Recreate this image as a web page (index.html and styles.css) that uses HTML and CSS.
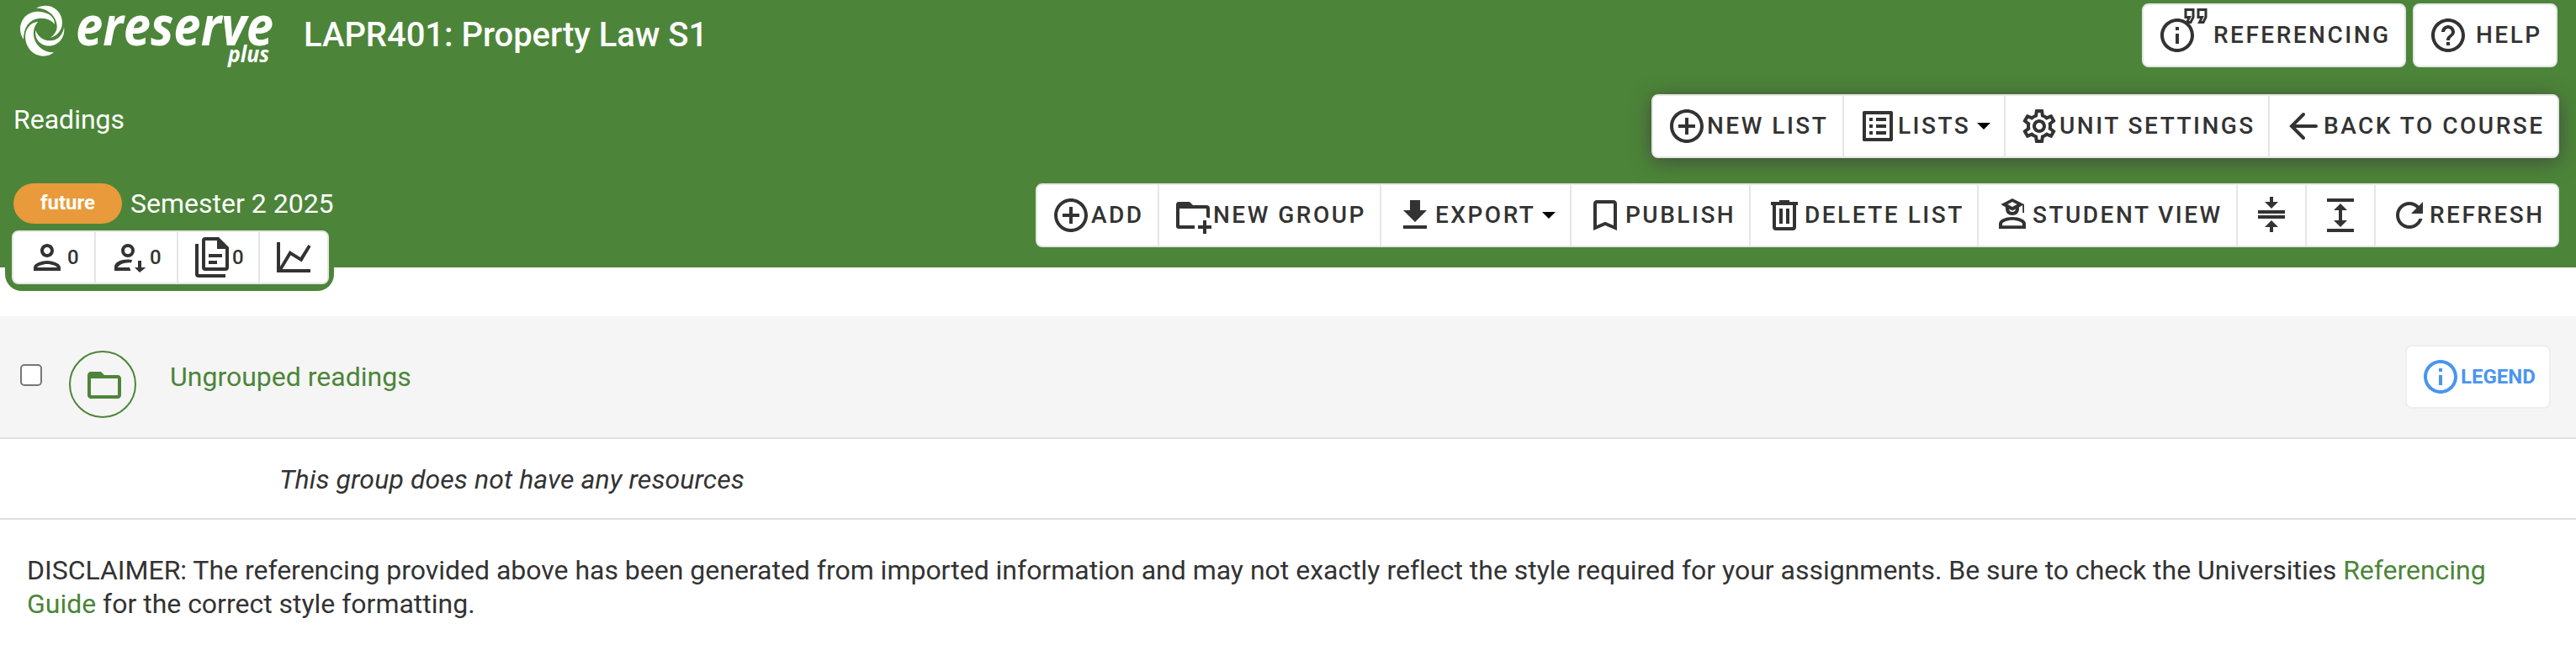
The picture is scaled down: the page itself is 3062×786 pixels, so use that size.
FILE: index.html
```
<!DOCTYPE html>
<html lang="en">
<head>
    <meta charset="UTF-8">
    <meta name="viewport" content="width=device-width, initial-scale=1.0">
    <title>LAPR401: Property Law S1</title>
    <link rel="stylesheet" href="styles.css">
</head>
<body>
    <header class="header">
        <div class="row row-top">
            <svg class="logo" viewBox="0 0 310 84">
                <g fill="#fff" transform="translate(-24 0) scale(0.3333)">
                    <path d="M130 29C150 17 180 17 200 34C220 50 224 75 221 92C216 114 198 130 180 134C196 122 204 108 203 92C202 60 172 28 130 29Z"/>
                    <path d="M84 140C68 118 68 88 84 66C102 42 132 38 156 44C182 50 195 66 195 86C184 72 162 62 138 66C104 70 84 98 84 140Z"/>
                    <path d="M136 77C108 80 91 102 90 130C91 172 120 200 155 200C170 200 183 195 192 187C160 189 130 168 122 136C116 112 122 92 136 77Z"/>
                    <path d="M228 95C234 126 216 156 184 163C150 168 122 144 127 108C136 132 156 146 180 145C206 143 226 124 228 95Z"/>
                </g>
                <text class="logo-name" x="66" y="54" textLength="235" lengthAdjust="spacingAndGlyphs">ereserve</text>
                <text class="logo-plus" x="247" y="74" textLength="49" lengthAdjust="spacingAndGlyphs">plus</text>
            </svg>
            <h1 class="title">LAPR401: Property Law S1</h1>
            <div class="top-buttons">
                <button class="btn w-ref">
                    <svg class="icon" viewBox="0 0 24 24"><path d="M11 7h2v2h-2zm0 4h2v6h-2zm1-9C6.480 2 2 6.480 2 12s4.480 10 10 10 10-4.480 10-10S17.520 2 12 2zm0 18c-4.410 0-8-3.590-8-8s3.590-8 8-8 8 3.590 8 8-3.590 8-8 8z"/></svg>
                    <svg class="quote" viewBox="0 0 24 24"><path d="M18.620 18h-5.240l2-4H13V6h8v7.240L18.620 18zm-2-2h.760L19 12.760V8h-4v4h3.620l-2 4zm-8 2H3.380l2-4H3V6h8v7.240L8.620 18zm-2-2h.760L9 12.760V8H5v4h3.620l-2 4z"/></svg>
                    <span>REFERENCING</span>
                </button>
                <button class="btn w-help">
                    <svg class="icon" viewBox="0 0 24 24"><path d="M11 18h2v-2h-2v2zm1-16C6.480 2 2 6.480 2 12s4.480 10 10 10 10-4.480 10-10S17.520 2 12 2zm0 18c-4.410 0-8-3.590-8-8s3.590-8 8-8 8 3.590 8 8-3.590 8-8 8zm0-14c-2.210 0-4 1.790-4 4h2c0-1.100.9-2 2-2s2 .9 2 2c0 2-3 1.750-3 5h2c0-2.250 3-2.500 3-5 0-2.210-1.790-4-4-4z"/></svg>
                    <span>HELP</span>
                </button>
            </div>
        </div>

        <div class="row row-readings">
            <div class="subtitle">Readings</div>
            <div class="group group-raised">
                <button class="item w-new-list">
                    <svg class="icon" viewBox="0 0 24 24"><path d="M13 7h-2v4H7v2h4v4h2v-4h4v-2h-4V7zm-1-5C6.480 2 2 6.480 2 12s4.480 10 10 10 10-4.480 10-10S17.520 2 12 2zm0 18c-4.410 0-8-3.590-8-8s3.590-8 8-8 8 3.590 8 8-3.590 8-8 8z"/></svg>
                    <span>NEW LIST</span>
                </button>
                <button class="item w-lists">
                    <svg class="icon" viewBox="0 0 24 24"><path d="M11 7h6v2h-6zm0 4h6v2h-6zm0 4h6v2h-6zM7 7h2v2H7zm0 4h2v2H7zm0 4h2v2H7zM20.100 3H3.900c-.5 0-.9.400-.9.900v16.200c0 .4.400.9.900.9h16.200c.4 0 .9-.5.900-.9V3.900c0-.5-.5-.9-.9-.9zM19 19H5V5h14v14z"/></svg>
                    <span>LISTS</span>
                    <i class="caret"></i>
                </button>
                <button class="item w-settings">
                    <svg class="icon" viewBox="0 0 24 24"><path d="M19.430 12.980c.04-.32.070-.64.070-.98 0-.34-.03-.66-.07-.98l2.110-1.650c.19-.15.240-.42.120-.64l-2-3.460c-.09-.16-.26-.25-.44-.25-.06 0-.12.010-.17.030l-2.490 1c-.52-.4-1.080-.73-1.690-.98l-.38-2.650C14.460 2.180 14.250 2 14 2h-4c-.25 0-.46.180-.49.420l-.38 2.650c-.61.250-1.170.590-1.690.980l-2.490-1c-.06-.02-.12-.03-.18-.03-.17 0-.34.090-.43.250l-2 3.460c-.13.220-.07.490.120.640l2.110 1.650c-.04.320-.07.650-.07.980s.03.660.070.980l-2.110 1.650c-.19.150-.24.420-.12.640l2 3.460c.09.160.260.250.440.250.06 0 .12-.01.170-.03l2.490-1c.52.400 1.080.730 1.690.980l.38 2.650c.03.240.240.420.490.420h4c.25 0 .46-.18.490-.42l.38-2.650c.61-.25 1.170-.59 1.690-.98l2.490 1c.06.020.120.030.180.030.17 0 .34-.09.430-.25l2-3.460c.12-.22.070-.49-.12-.64l-2.110-1.650zm-1.980-1.710c.04.310.050.520.050.730 0 .21-.02.430-.05.730l-.14 1.130.89.700 1.080.840-.7 1.210-1.270-.51-1.040-.42-.9.680c-.43.320-.84.560-1.250.730l-1.060.43-.16 1.130-.2 1.350h-1.400l-.19-1.350-.16-1.130-1.060-.43c-.43-.18-.83-.41-1.230-.71l-.91-.7-1.060.43-1.270.51-.7-1.210 1.080-.84.890-.7-.14-1.130c-.03-.31-.05-.54-.05-.74s.02-.43.050-.73l.14-1.130-.89-.7-1.080-.84.700-1.210 1.270.51 1.040.42.900-.68c.43-.32.840-.56 1.250-.73l1.060-.43.160-1.130.2-1.350h1.390l.19 1.350.160 1.130 1.060.43c.43.180.830.410 1.230.710l.91.700 1.060-.43 1.270-.51.700 1.210-1.070.850-.89.700.140 1.130zM12 8c-2.210 0-4 1.790-4 4s1.790 4 4 4 4-1.790 4-4-1.790-4-4-4zm0 6c-1.100 0-2-.9-2-2s.9-2 2-2 2 .9 2 2-.9 2-2 2z"/></svg>
                    <span>UNIT SETTINGS</span>
                </button>
                <button class="item w-back">
                    <svg class="icon" viewBox="0 0 24 24"><path class="line" stroke-linecap="round" d="M19.500 12H5.500M12 5l-7 7 7 7"/></svg>
                    <span>BACK TO COURSE</span>
                </button>
            </div>
        </div>

        <div class="row row-semester">
            <div class="semester">
                <span class="badge">future</span>
                <span>Semester 2 2025</span>
            </div>
            <div class="group">
                <button class="item w-add">
                    <svg class="icon" viewBox="0 0 24 24"><path d="M13 7h-2v4H7v2h4v4h2v-4h4v-2h-4V7zm-1-5C6.480 2 2 6.480 2 12s4.480 10 10 10 10-4.480 10-10S17.520 2 12 2zm0 18c-4.410 0-8-3.590-8-8s3.590-8 8-8 8 3.590 8 8-3.590 8-8 8z"/></svg>
                    <span>ADD</span>
                </button>
                <button class="item w-new-group">
                    <svg class="icon" viewBox="0 0 24 24"><path d="M13 18v2H3.500C2.500 20 2 19.500 2 18.500V5.700C2 4.600 2.600 4 3.700 4H10l2 2h8c1.300 0 2 .7 2 2v5.800l-2-.7V8H4v10zM18 15h2v3h3v2h-3v3h-2v-3h-3v-2h3z"/></svg>
                    <span>NEW GROUP</span>
                </button>
                <button class="item w-export">
                    <svg class="icon" viewBox="0 0 24 24"><path d="M19 9h-4V3H9v6H5l7 7 7-7zM5 18v2h14v-2H5z"/></svg>
                    <span>EXPORT</span>
                    <i class="caret"></i>
                </button>
                <button class="item w-publish">
                    <svg class="icon" viewBox="0 0 24 24"><path d="M17 3H7c-1.100 0-2 .9-2 2v16l7-3 7 3V5c0-1.100-.9-2-2-2zm0 15l-5-2.180L7 18V5h10v13z"/></svg>
                    <span>PUBLISH</span>
                </button>
                <button class="item w-delete">
                    <svg class="icon" viewBox="0 0 24 24"><path d="M9 3h6v1h5v2h-1v13c0 1.300-.7 2-2 2H7c-1.300 0-2-.7-2-2V6H4V4h5zM7 6v13h10V6zM9 8h2v9H9zM13 8h2v9h-2z"/></svg>
                    <span>DELETE LIST</span>
                </button>
                <button class="item w-student">
                    <svg class="icon" viewBox="0 0 24 24"><path fill-rule="evenodd" d="M12 2l7 3.500V10.500h-.9V6L16 7.200V8c0 2.500-1.500 4-4 4s-4-1.500-4-4v-.8L5.200 5.500zM12 4L9.200 5.500 12 7l2.800-1.500zM10 8.300c.2 1.200.8 1.700 2 1.700s1.800-.5 2-1.700l-2 1zM12 13c4 0 8 1.500 8 4v3H4v-3c0-2.500 4-4 8-4zM12 14.900c-3 0-6 1.300-6 2.300v.9h12v-.9c0-1-3-2.300-6-2.300z"/></svg>
                    <span>STUDENT VIEW</span>
                </button>
                <button class="item w-collapse">
                    <svg class="icon" viewBox="0 0 24 24"><path d="M8 19h3v3h2v-3h3l-4-4-4 4zm8-15h-3V1h-2v3H8l4 4 4-4zM4 9v2h16V9H4zm0 3v2h16v-2H4z"/></svg>
                </button>
                <button class="item w-collapse">
                    <svg class="icon" viewBox="0 0 24 24"><path d="M4 20h16v2H4zM4 2h16v2H4zm9 7h3l-4-4-4 4h3v6H8l4 4 4-4h-3z"/></svg>
                </button>
                <button class="item w-refresh">
                    <svg class="icon" viewBox="0 0 24 24"><path d="M17.650 6.350C16.200 4.900 14.210 4 12 4c-4.420 0-7.990 3.580-7.990 8s3.570 8 7.990 8c3.730 0 6.840-2.550 7.730-6h-2.080c-.82 2.330-3.040 4-5.650 4-3.310 0-6-2.690-6-6s2.690-6 6-6c1.660 0 3.140.69 4.220 1.780L13 11h7V4l-2.350 2.350z"/></svg>
                    <span>REFRESH</span>
                </button>
            </div>
        </div>
    </header>

    <!-- Stats tab hangs over the bottom edge of the header -->
    <div class="stats">
        <div class="stats-group">
            <button class="stat w-people">
                <svg class="icon" viewBox="0 0 24 24"><path d="M12 6c1.100 0 2 .9 2 2s-.9 2-2 2-2-.9-2-2 .9-2 2-2m0 10c2.700 0 5.800 1.290 6 2H6c.23-.72 3.310-2 6-2m0-12C9.790 4 8 5.790 8 8s1.790 4 4 4 4-1.790 4-4-1.790-4-4-4zm0 10c-2.670 0-8 1.340-8 4v2h16v-2c0-2.660-5.330-4-8-4z"/></svg>
                <span>0</span>
            </button>
            <button class="stat w-down">
                <svg class="icon" viewBox="0 0 24 24"><path d="M11 4a4 4 0 1 1 0 8 4 4 0 0 1 0-8zm0 2a2 2 0 1 0 0 4 2 2 0 0 0 0-4zM11 13.200c1 0 1.800.1 2.600.3L12.900 15.200C9.500 14.700 5.500 16.300 5 18h7l.7 2H3v-2.500c0-2.700 4-4.300 8-4.300zM17 14h2v4h2.700L18 21l-3-3h2z"/></svg>
                <span>0</span>
            </button>
            <button class="stat w-docs">
                <svg class="icon" viewBox="0 0 24 24"><path d="M8 0H16l6 6v12c0 1.300-.7 2-2 2H8c-1.300 0-2-.7-2-2V2c0-1.300.7-2 2-2zM8 2v16h12V7h-5V2zM2 4h2v18h16v2H4c-1.300 0-2-.7-2-2zM10 10h8v2h-8zM10 14h5v2h-5z"/></svg>
                <span>0</span>
            </button>
            <button class="stat w-chart">
                <svg class="icon" viewBox="0 0 24 24"><path d="M2 3h2v14.500L9.600 8l6.400 4 4.700-7.500 1.600 1-5.500 9.200-6.500-4L5.300 19H22v2H2z"/></svg>
            </button>
        </div>
    </div>

    <main class="content">
        <div class="reading-group">
            <input type="checkbox" class="check">
            <div class="folder">
                <svg class="icon" viewBox="0 0 24 24"><path d="M20 6h-8l-2-2H4c-1.100 0-2 .9-2 2v12c0 1.100.9 2 2 2h16c1.100 0 2-.9 2-2V8c0-1.100-.9-2-2-2zm0 12H4V8h16v10z"/></svg>
            </div>
            <a class="group-name">Ungrouped readings</a>
            <button class="legend">
                <svg class="icon" viewBox="0 0 24 24"><path d="M11 7h2v2h-2zm0 4h2v6h-2zm1-9C6.480 2 2 6.480 2 12s4.480 10 10 10 10-4.480 10-10S17.520 2 12 2zm0 18c-4.410 0-8-3.590-8-8s3.590-8 8-8 8 3.590 8 8-3.590 8-8 8z"/></svg>
                <span>LEGEND</span>
            </button>
        </div>
        <div class="empty">This group does not have any resources</div>
        <p class="disclaimer">DISCLAIMER: The referencing provided above has been generated from imported information and may not exactly reflect the style required for your assignments. Be sure to check the Universities <a>Referencing Guide</a> for the correct style formatting.</p>
    </main>
</body>
</html>
```
FILE: styles.css
```
* {
    box-sizing: border-box;
}

body {
    margin: 0;
    font-family: Roboto, "Liberation Sans", sans-serif;
    font-size: 32px;
    line-height: 40px;
    color: #333;
    background-color: #fff;
}

button {
    font-family: inherit;
    font-size: 28px;
    font-weight: 500;
    letter-spacing: 2.5px;
    line-height: 36px;
    color: #333;
    background-color: #fff;
    margin: 0;
    padding: 0 0 0 16px;
    border: none;
    display: flex;
    align-items: center;
    white-space: nowrap;
    cursor: pointer;
}

.icon {
    width: 48px;
    height: 48px;
    flex: none;
    fill: currentColor;
}

.line {
    fill: none;
    stroke: currentColor;
    stroke-width: 2;
}

/* Header */
.header {
    height: 318px;
    background-color: #4c8539;
    color: #fff;
}

.row {
    display: flex;
    justify-content: space-between;
    padding-right: 20px;
}

.row-top {
    height: 112px;
    padding: 4px 22px 0 24px;
}

.row-readings {
    height: 106px;
    padding-left: 16px;
}

.row-semester {
    padding-left: 16px;
}

.logo {
    width: 310px;
    height: 84px;
    margin-top: -4px;
    flex: none;
    overflow: visible;
}

.logo text {
    fill: #fff;
    font-family: "Open Sans", sans-serif;
    font-style: italic;
    font-weight: 700;
}

.logo-name {
    font-size: 65px;
}

.logo-plus {
    font-size: 26px;
}

.title {
    margin: 18px auto 0 27px;
    font-size: 40px;
    font-weight: 500;
    line-height: 40px;
    letter-spacing: -0.05px;
}

.top-buttons {
    display: flex;
    gap: 8px;
}

.btn {
    position: relative;
    height: 76px;
    border: 2px solid #e6e6e6;
    border-radius: 8px;
}

.btn span {
    margin-left: 9px;
}

.w-ref span {
    margin-left: 19px;
}

.quote {
    position: absolute;
    left: 44px;
    top: -5px;
    width: 36px;
    height: 36px;
    fill: currentColor;
}

.w-ref { width: 314px; }
.w-help { width: 172px; }

.subtitle {
    padding-top: 10px;
}

.group {
    display: flex;
    height: 76px;
    border: 2px solid #e6e6e6;
    border-radius: 8px;
    background-color: #fff;
    overflow: hidden;
}

.group-raised {
    box-shadow: 0 4px 24px rgba(60, 40, 60, 0.6);
}

.item {
    border-right: 2px solid #e6e6e6;
}

.item:last-child {
    border-right: none;
}

.caret {
    margin-left: 8px;
    border-left: 8px solid transparent;
    border-right: 8px solid transparent;
    border-top: 8px solid #000;
}

.w-new-list { width: 227px; }
.w-lists { width: 192px; }
.w-settings { width: 314px; }
.w-back { width: 342px; }

.w-add { width: 145px; }
.w-new-group { width: 264px; }
.w-export { width: 226px; }
.w-publish { width: 213px; }
.w-delete { width: 271px; }
.w-student { width: 308px; }
.w-collapse { width: 82px; }
.w-refresh { width: 216px; }

.semester {
    display: flex;
    align-items: center;
    gap: 10px;
    height: 48px;
}

.badge {
    width: 129px;
    height: 48px;
    border-radius: 24px;
    background-color: #e99a3a;
    font-size: 24px;
    font-weight: 700;
    line-height: 47px;
    text-align: center;
}

/* Stats */
.stats {
    position: absolute;
    left: 6px;
    top: 274px;
    width: 391px;
    height: 72px;
    padding: 0 6px 8px 8px;
    background-color: #4c8539;
    border-radius: 0 0 20px 20px;
}

.stats-group {
    display: flex;
    height: 64px;
    border: 2px solid #e6e6e6;
    border-radius: 8px;
    background-color: #fff;
    overflow: hidden;
}

.stat {
    font-size: 24px;
    letter-spacing: 0;
    border-right: 2px solid #e6e6e6;
}

.stat:last-child {
    border-right: none;
}

.w-people { width: 98px; }
.w-down { width: 98px; }
.w-docs { width: 97px; }
.w-chart { width: 80px; }

/* Content */
.content {
    padding-top: 58px;
}

.reading-group {
    display: flex;
    height: 146px;
    padding: 0 30px 0 24px;
    background-color: #f5f5f5;
    border-bottom: 2px solid #e0e0e0;
}

.check {
    appearance: none;
    width: 26px;
    height: 26px;
    margin: 57px 32px 0 0;
    border: 2px solid #767676;
    border-radius: 5px;
    background-color: #fff;
}

.folder {
    display: flex;
    align-items: center;
    justify-content: center;
    width: 80px;
    height: 80px;
    margin-top: 41px;
    padding: 2px 0 0 4px;
    border: 2px solid #4c8539;
    border-radius: 50%;
    color: #4c8539;
}

.group-name {
    margin: 52px auto 0 40px;
    color: #4c8539;
}

.legend {
    width: 173px;
    height: 76px;
    margin-top: 34px;
    border: 2px solid #eee;
    border-radius: 8px;
    font-size: 24px;
    font-weight: 700;
    letter-spacing: 0;
    color: #4a95ee;
}

.empty {
    height: 96px;
    padding: 28px 0 0 332px;
    border-bottom: 2px solid #e0e0e0;
    font-style: italic;
    letter-spacing: 0.1px;
}

.disclaimer {
    margin: 0;
    padding: 40px 32px 0;
    letter-spacing: -0.015px;
}

.disclaimer a {
    color: #4c8539;
}
```
